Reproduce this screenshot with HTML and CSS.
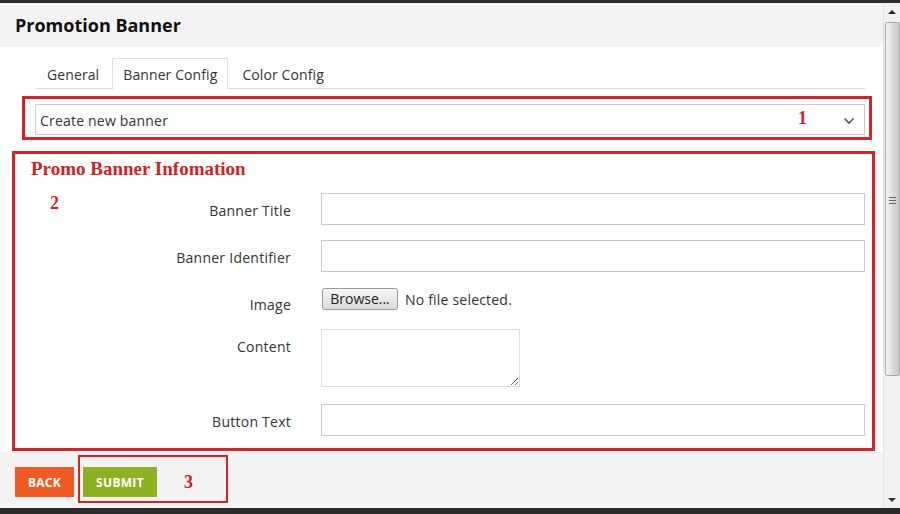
FILE: index.html
```html
<!DOCTYPE html>
<html>
<head>
<meta charset="utf-8">
<title>Promotion Banner</title>
<link rel="stylesheet" href="styles.css">
</head>
<body>
<div class="frame">
  <div class="dialog">
    <div class="header"><h1 class="title">Promotion Banner</h1></div>
    <div class="content">
      <ul class="tabs">
        <li class="tab">General</li>
        <li class="tab active">Banner Config</li>
        <li class="tab">Color Config</li>
      </ul>
      <div class="mark mark-select">
        <div class="select">
          <span>Create new banner</span>
          <svg class="chevron" width="12" height="8" viewBox="0 0 12 8"><polyline points="1.5,1.5 6,6 10.5,1.5" fill="none" stroke="#555" stroke-width="1.6"/></svg>
        </div>
        <span class="num num-1">1</span>
      </div>
      <div class="mark mark-form">
        <h2 class="section">Promo Banner Infomation</h2>
        <span class="num num-2">2</span>
        <div class="row">
          <label class="label">Banner Title</label>
          <input class="input" type="text">
        </div>
        <div class="row">
          <label class="label">Banner Identifier</label>
          <input class="input" type="text">
        </div>
        <div class="row row-file">
          <label class="label">Image</label>
          <div class="file"><button class="browse" type="button">Browse...</button><span class="nofile">No file selected.</span></div>
        </div>
        <div class="row row-area">
          <label class="label">Content</label>
          <textarea class="area"></textarea>
        </div>
        <div class="row row-last">
          <label class="label">Button Text</label>
          <input class="input" type="text">
        </div>
      </div>
    </div>
    <div class="footer">
      <button class="btn btn-back" type="button">BACK</button>
      <div class="mark-submit">
        <button class="btn btn-submit" type="button">SUBMIT</button>
        <span class="num num-3">3</span>
      </div>
    </div>
  </div>
  <div class="scrollbar">
    <div class="arrow arrow-up"></div>
    <div class="thumb"><div class="grip"><i></i><i></i><i></i></div></div>
    <div class="track"></div>
    <div class="arrow arrow-down"></div>
  </div>
</div>
</body>
</html>
```
FILE: styles.css
```css
* { box-sizing: border-box; }
html, body { margin: 0; padding: 0; }
body {
  background: #2a2a2a;
  font-family: "Open Sans", "Liberation Sans", sans-serif;
  font-size: 14px;
  color: #333;
  width: 900px;
  height: 514px;
  overflow: hidden;
}
.frame {
  margin-top: 3px;
  height: 505px;
  display: flex;
}
.dialog {
  width: 883px;
  display: flex;
  flex-direction: column;
  background: #f3f3f3;
}
.header {
  height: 44px;
  padding: 10px 0 0 15px;
  background: #f3f3f3;
}
.title {
  margin: 0;
  font-size: 18px;
  line-height: 24px;
  font-weight: 700;
  color: #111;
}
.content {
  height: 405px;
  background: #fff;
  padding-top: 11px;
}
.tabs {
  list-style: none;
  margin: 0 18px 0 35px;
  padding: 0;
  display: flex;
  border-bottom: 1px solid #ddd;
  height: 31px;
}
.tab {
  padding: 1px 11px 0 11px;
  margin-right: 1px;
  line-height: 30px;
  height: 31px;
  color: #333;
  letter-spacing: 0.1px;
  border: 1px solid transparent;
  border-bottom: none;
}
.tab.active {
  border-color: #ddd;
  background: #fff;
  padding: 1px 10px 0 10px;
  margin-right: 2px;
}
.mark {
  border: 3px solid #d7222b;
  position: relative;
}
.mark-select {
  margin: 7px 11px 0 22px;
  padding: 5px 4px 2px 10px;
}
.select {
  height: 31px;
  border: 1px solid #ccc;
  display: flex;
  align-items: center;
  justify-content: space-between;
  padding: 2px 9px 0 4px;
  color: #333;
  letter-spacing: 0.2px;
}
.chevron { margin-top: 1px; }
.num {
  position: absolute;
  font-family: "Liberation Serif", "Times New Roman", serif;
  font-weight: 700;
  font-size: 18px;
  line-height: 18px;
  color: #d11f29;
}
.num-1 { left: 773px; top: 10px; }
.num-2 { left: 35px; top: 40px; }
.mark-form {
  margin: 11px 8px 1px 12px;
  padding: 4px 7px 12px 0;
}
.section {
  margin: 0 0 13px 16px;
  font-family: "Liberation Serif", "Times New Roman", serif;
  font-weight: 700;
  font-size: 19px;
  line-height: 22px;
  color: #d11f29;
}
.row {
  display: grid;
  grid-template-columns: 276px 1fr;
  column-gap: 30px;
  align-items: start;
  margin-bottom: 15px;
}
.label {
  text-align: right;
  line-height: 32px;
  height: 32px;
  padding-top: 2px;
  color: #333;
  letter-spacing: 0.25px;
}
.input {
  height: 32px;
  border: 1px solid #c8c8c8;
  margin: 0;
  padding: 0 6px;
  font: inherit;
  background: #fff;
  width: 100%;
}
.row-file { height: 27px; }
.file {
  display: flex;
  align-items: center;
  padding-top: 1px;
  padding-left: 1px;
}
.browse {
  height: 22px;
  width: 76px;
  margin: 0;
  padding: 0;
  border: 1px solid #9a9a9a;
  border-radius: 3px;
  background: linear-gradient(#f6f6f6, #dcdcdc);
  font-family: "Open Sans", "Liberation Sans", sans-serif;
  font-size: 14px;
  color: #222;
  line-height: 20px;
}
.nofile { margin-left: 7px; color: #333; letter-spacing: 0.2px; }
.row-area { margin-bottom: 17px; }
.area {
  width: 199px;
  height: 58px;
  border: 1px solid #dcdcdc;
  margin: 0;
  resize: both;
  font: inherit;
}
.row-last { margin-bottom: 0; }
.footer {
  flex: 1;
  background: #f3f3f3;
  display: flex;
  align-items: flex-start;
  padding: 3px 0 0 15px;
}
.btn {
  height: 30px;
  border: none;
  margin: 0;
  padding: 0;
  color: #fff;
  font-family: "Open Sans", "Liberation Sans", sans-serif;
  font-weight: 700;
  font-size: 12px;
  letter-spacing: 0.3px;
}
.btn-back {
  width: 59px;
  background: #f15a24;
  margin-top: 12px;
}
.mark-submit {
  margin-left: 4px;
  width: 150px;
  height: 48px;
  border: 2px solid #d7222b;
  display: flex;
  align-items: flex-start;
  padding: 10px 0 0 3px;
}
.btn-submit {
  width: 74px;
  background: #8bb221;
}
.num-3 {
  position: static;
  margin-left: 27px;
  margin-top: 6px;
}
.scrollbar {
  width: 17px;
  background: #f0f0f0;
  border-left: 1px solid #e2e2e2;
  display: flex;
  flex-direction: column;
  align-items: center;
}
.arrow {
  width: 0;
  height: 0;
  border-left: 4px solid transparent;
  border-right: 4px solid transparent;
}
.arrow-up {
  margin-top: 7px;
  border-bottom: 4px solid #222;
}
.arrow-down {
  margin-bottom: 6px;
  border-top: 4px solid #333;
}
.thumb {
  margin-top: 8px;
  width: 15px;
  height: 354px;
  border: 1px solid #a9a9a9;
  border-radius: 2px;
  background: linear-gradient(to right, #f4f4f4, #dadada 55%, #c9c9c9);
  display: flex;
  align-items: center;
  justify-content: center;
}
.grip {
  display: flex;
  flex-direction: column;
  gap: 2px;
  margin-top: 2px;
}
.grip i {
  display: block;
  width: 7px;
  height: 1px;
  background: #666;
}
.track { flex: 1; }
```
